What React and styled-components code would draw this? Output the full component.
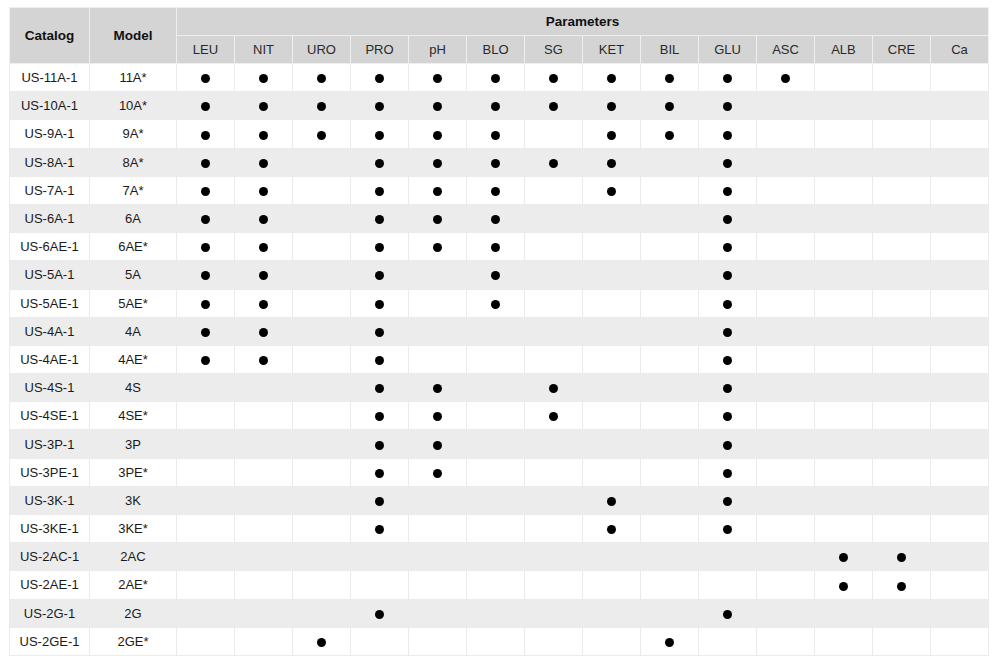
import React from "react";
import styled, { createGlobalStyle } from "styled-components";

const GlobalStyle = createGlobalStyle`
  body {
    margin: 0;
    background: #fff;
    font-family: "Liberation Sans", Arial, sans-serif;
  }
`;

const Page = styled.div`
  padding: 7px 11px 0 9px;
`;

const Table = styled.table`
  width: 980px;
  border-collapse: collapse;
  table-layout: fixed;
  font-size: 13px;
  color: #1a1a1a;
`;

const Head = styled.th`
  background: #d4d4d4;
  border: 1px solid #efefef;
  height: 27px;
  padding: 0;
  text-align: center;
  font-weight: ${(p) => (p.bold ? 700 : 400)};
  font-size: ${(p) => (p.bold ? "13.5px" : "13px")};
  color: ${(p) => (p.bold ? "#111" : "#2a2a2a")};
`;

const Row = styled.tr`
  background: ${(p) => (p.shade ? "#ececec" : "#fff")};
  height: 28.2px;
`;

const Cell = styled.td`
  border: 1px solid #ebebeb;
  padding: 0;
  text-align: center;
  vertical-align: middle;
`;

const Dot = styled.span`
  display: inline-block;
  width: 9px;
  height: 9px;
  border-radius: 50%;
  background: #000;
  vertical-align: middle;
`;

const params = ["LEU", "NIT", "URO", "PRO", "pH", "BLO", "SG", "KET", "BIL", "GLU", "ASC", "ALB", "CRE", "Ca"];

const rows = [
  ["US-11A-1", "11A*", "LEU NIT URO PRO pH BLO SG KET BIL GLU ASC"],
  ["US-10A-1", "10A*", "LEU NIT URO PRO pH BLO SG KET BIL GLU"],
  ["US-9A-1", "9A*", "LEU NIT URO PRO pH BLO KET BIL GLU"],
  ["US-8A-1", "8A*", "LEU NIT PRO pH BLO SG KET GLU"],
  ["US-7A-1", "7A*", "LEU NIT PRO pH BLO KET GLU"],
  ["US-6A-1", "6A", "LEU NIT PRO pH BLO GLU"],
  ["US-6AE-1", "6AE*", "LEU NIT PRO pH BLO GLU"],
  ["US-5A-1", "5A", "LEU NIT PRO BLO GLU"],
  ["US-5AE-1", "5AE*", "LEU NIT PRO BLO GLU"],
  ["US-4A-1", "4A", "LEU NIT PRO GLU"],
  ["US-4AE-1", "4AE*", "LEU NIT PRO GLU"],
  ["US-4S-1", "4S", "PRO pH SG GLU"],
  ["US-4SE-1", "4SE*", "PRO pH SG GLU"],
  ["US-3P-1", "3P", "PRO pH GLU"],
  ["US-3PE-1", "3PE*", "PRO pH GLU"],
  ["US-3K-1", "3K", "PRO KET GLU"],
  ["US-3KE-1", "3KE*", "PRO KET GLU"],
  ["US-2AC-1", "2AC", "ALB CRE"],
  ["US-2AE-1", "2AE*", "ALB CRE"],
  ["US-2G-1", "2G", "PRO GLU"],
  ["US-2GE-1", "2GE*", "URO BIL"],
];

export default function App() {
  return (
    <Page>
      <GlobalStyle />
      <Table>
        <colgroup>
          <col style={{ width: 80 }} />
          <col style={{ width: 87 }} />
          {params.map((p) => (
            <col key={p} />
          ))}
        </colgroup>
        <thead>
          <tr>
            <Head bold rowSpan={2}>Catalog</Head>
            <Head bold rowSpan={2}>Model</Head>
            <Head bold colSpan={14}>Parameters</Head>
          </tr>
          <tr>
            {params.map((p) => (
              <Head key={p}>{p}</Head>
            ))}
          </tr>
        </thead>
        <tbody>
          {rows.map(([cat, model, has], i) => {
            const set = has.split(" ");
            return (
              <Row key={cat} shade={i % 2 === 1}>
                <Cell>{cat}</Cell>
                <Cell>{model}</Cell>
                {params.map((p) => (
                  <Cell key={p}>{set.includes(p) && <Dot />}</Cell>
                ))}
              </Row>
            );
          })}
        </tbody>
      </Table>
    </Page>
  );
}
